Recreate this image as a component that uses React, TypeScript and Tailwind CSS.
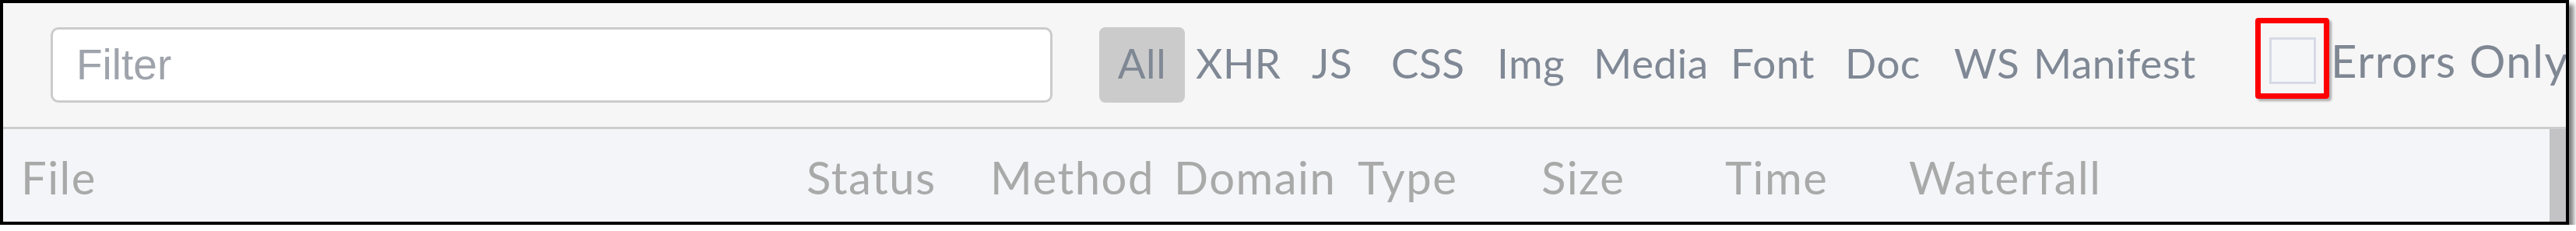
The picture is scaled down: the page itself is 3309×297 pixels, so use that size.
import React from 'react'

const filters = [
  { label: 'XHR', w: 'w-[149px]' },
  { label: 'JS', w: 'w-[102px]' },
  { label: 'CSS', w: 'w-[136px]' },
  { label: 'Img', w: 'w-[124px]' },
  { label: 'Media', w: 'w-[176px]' },
  { label: 'Font', w: 'w-[147px]' },
  { label: 'Doc', w: 'w-[140px]' },
  { label: 'WS', w: 'w-[102px]' },
  { label: 'Manifest', w: 'w-[299px]' },
]

const columns = ['File', 'Status', 'Method', 'Domain', 'Type', 'Size', 'Time', 'Waterfall']

const App = () => {
  return (
    <div className="w-[3300px] h-[289px] border-4 border-black overflow-hidden flex flex-col bg-white shadow-[6px_6px_6px_rgba(0,0,0,0.5)] font-['Lato',sans-serif]">
      {/* toolbar */}
      <div className="h-[159px] shrink-0 bg-[#f6f6f7] flex items-center pl-[61px]">
        <div className="w-[1287px] h-[97px] shrink-0 bg-white border-[3px] border-[#cbcbcb] rounded-[10px] flex items-center pl-[30px]">
          <span className="text-[55px] text-[#9fa3ab] font-['Liberation_Sans',Arial,sans-serif]">Filter</span>
        </div>
        <div className="flex items-center ml-[60px] shrink-0 text-[53px] leading-none tracking-[0.5px] text-[#7f8894]">
          <button className="w-[110px] h-[97px] shrink-0 bg-[#cbcbcb] rounded-[8px] flex items-center justify-center pb-[6px]">
            All
          </button>
          {filters.map((f) => (
            <span key={f.label} className={`${f.w} shrink-0 pl-[14px] pb-[6px]`}>
              {f.label}
            </span>
          ))}
        </div>
        <div className="flex items-start self-start mt-[19px] shrink-0">
          <div className="border-[7px] border-[#ff0000] rounded-[4px] pt-[18px] pl-[11px] pr-[10px] pb-[12px] shadow-[3px_3px_3px_rgba(0,0,0,0.3)]">
            <div className="w-[60px] h-[60px] border-[3px] border-[#d6dae4] bg-[#f5f6f8]" />
          </div>
          <span className="mt-[26px] ml-[2px] text-[58px] leading-none tracking-[1.5px] text-[#7f8793] whitespace-nowrap">
            Errors Only
          </span>
        </div>
      </div>
      <div className="h-[3px] shrink-0 bg-[#cdcdcd]" />
      {/* table header */}
      <div className="flex-1 flex bg-[#f4f5f8]">
        <div className="flex-1 grid grid-cols-[1009px_repeat(6,236px)_1fr] pl-[23px] pt-[33px] text-[58px] leading-none tracking-[1.5px] text-[#a9a9a9]">
          {columns.map((c) => (
            <div key={c}>{c}</div>
          ))}
        </div>
        <div className="w-[21px] shrink-0 bg-[#c3c3c5]" />
      </div>
    </div>
  )
}

export default App
